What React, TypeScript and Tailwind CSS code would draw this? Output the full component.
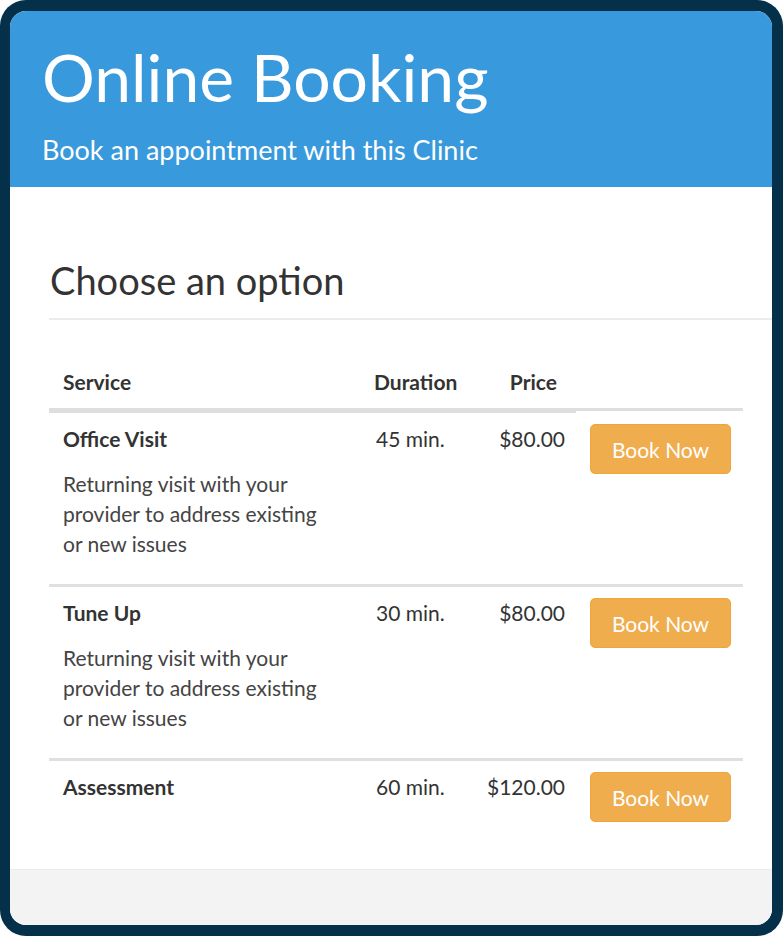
const services = [
  {
    name: 'Office Visit',
    duration: '45 min.',
    price: '$80.00',
    description: 'Returning visit with your provider to address existing or new issues',
  },
  {
    name: 'Tune Up',
    duration: '30 min.',
    price: '$80.00',
    description: 'Returning visit with your provider to address existing or new issues',
  },
  {
    name: 'Assessment',
    duration: '60 min.',
    price: '$120.00',
    description: '',
  },
];

const BookButton = () => (
  <button className="w-[141px] h-[50px] rounded-[5px] bg-[#f0ad4e] border border-[#eea53c] text-white text-[21px] leading-none">
    Book Now
  </button>
);

export default function App() {
  return (
    <div
      className="w-[783px] h-[936px] bg-white"
      style={{ fontFamily: 'Lato, "Open Sans", sans-serif' }}
    >
      <div className="w-full h-full rounded-[26px] bg-[#04304a] pt-[11px] pl-[10px] pr-[11px] pb-[11px]">
        <div className="w-full h-full rounded-[16px] overflow-hidden bg-white flex flex-col">
          <header className="h-[176px] shrink-0 bg-[#3899dc] px-[32px] pt-[33px] text-white">
            <h1 className="text-[66px] leading-[66px]">Online Booking</h1>
            <p className="mt-[26px] text-[27px] leading-[27px]">Book an appointment with this Clinic</p>
          </header>

          <main className="flex-1 pl-[39px] pt-[74px] text-[#333333]">
            <h2 className="text-[38px] leading-[38px] pl-[1px]">Choose an option</h2>
            <div className="mt-[19px] h-[2px] bg-[#ececec]" />

            <div className="mr-[29px] text-[21px] leading-[30px]">
              <div className="flex pt-[47px] pb-[11px] font-bold">
                <div className="w-[313px] pl-[14px]">Service</div>
                <div className="w-[108px] pl-[12px]">Duration</div>
                <div className="w-[106px] text-right pr-[19px]">Price</div>
                <div className="flex-1" />
              </div>
              <div className="flex items-start">
                <div className="w-[527px] h-[5px] bg-[#dedede]" />
                <div className="flex-1 h-[3px] bg-[#dedede]" />
              </div>

              {services.map((s, i) => (
                <div
                  key={s.name}
                  className={`flex pt-[11px] pb-[25px] ${i > 0 ? 'border-t-[3px] border-[#e0e0e0]' : ''}`}
                >
                  <div className="w-[313px] pl-[14px] pr-[30px]">
                    <div className="font-bold">{s.name}</div>
                    {s.description && <p className="mt-[15px] text-[#444444]">{s.description}</p>}
                  </div>
                  <div className="w-[108px] pl-[14px]">{s.duration}</div>
                  <div className="w-[106px] text-right pr-[11px]">{s.price}</div>
                  <div className="flex-1 pl-[14px]">
                    <BookButton />
                  </div>
                </div>
              ))}
            </div>
          </main>

          <footer className="h-[56px] shrink-0 bg-[#f3f3f3] border-t border-[#ececec]" />
        </div>
      </div>
    </div>
  );
}
